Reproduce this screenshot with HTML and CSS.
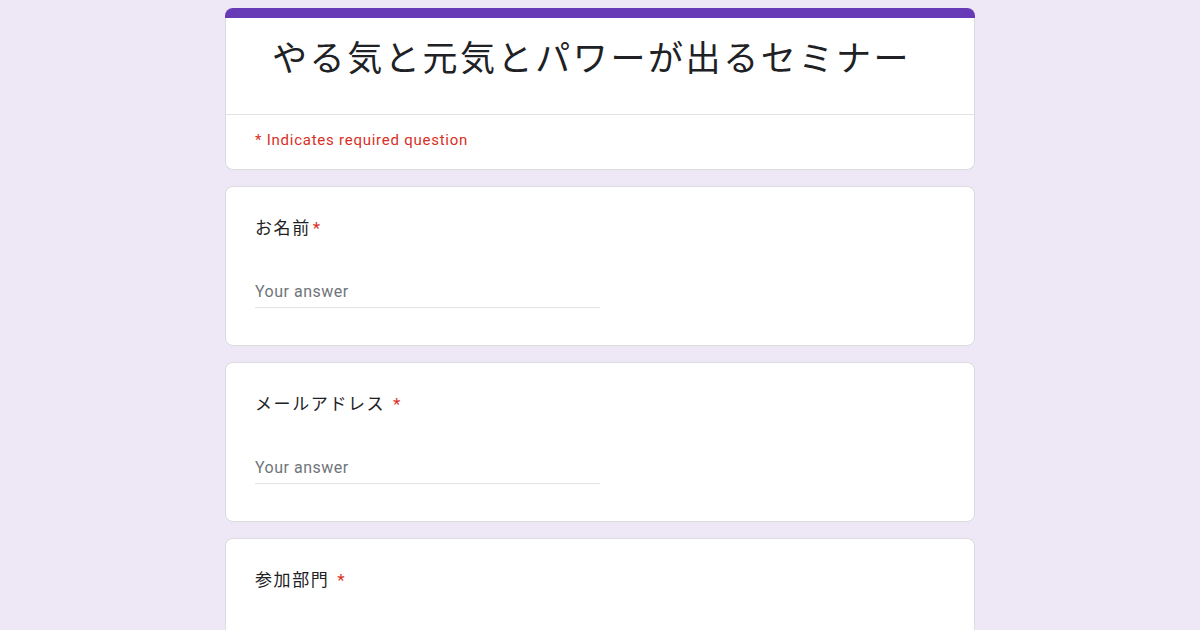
FILE: index.html
```html
<!DOCTYPE html>
<html lang="ja">
<head>
<meta charset="utf-8">
<title>やる気と元気とパワーが出るセミナー</title>
<link rel="stylesheet" href="styles.css">
</head>
<body>
<main class="page">
  <section class="form-head">
    <div class="accent"></div>
    <div class="head-body">
      <div class="title-wrap">
        <h1 class="title">やる気と元気とパワーが出るセミナー</h1>
      </div>
      <div class="required-note">* Indicates required question</div>
    </div>
  </section>

  <section class="card">
    <div class="q-label">お名前<span class="req">*</span></div>
    <div class="answer"><span class="placeholder">Your answer</span></div>
  </section>

  <section class="card">
    <div class="q-label">メールアドレス <span class="req">*</span></div>
    <div class="answer"><span class="placeholder">Your answer</span></div>
  </section>

  <section class="card">
    <div class="q-label">参加部門 <span class="req">*</span></div>
    <div class="options">
      <div class="option"><span class="radio"></span><span class="opt-text">ゲーム事業部</span></div>
      <div class="option"><span class="radio"></span><span class="opt-text">営業部</span></div>
    </div>
  </section>
</main>
</body>
</html>
```

FILE: styles.css
```css
html, body {
  margin: 0;
  padding: 0;
}

body {
  background: #ede7f6;
  font-family: Roboto, "Noto Sans CJK JP", sans-serif;
  color: #202124;
  height: 630px;
  overflow: hidden;
}

.page {
  display: flex;
  flex-direction: column;
  align-items: center;
  gap: 16px;
  padding-top: 8px;
}

.form-head,
.card {
  width: 750px;
  box-sizing: border-box;
}

.accent {
  height: 10px;
  background: #673ab7;
  border-radius: 8px 8px 0 0;
}

.head-body {
  background: #fff;
  border: 1px solid #dadce0;
  border-top: none;
  border-radius: 0 0 8px 8px;
}

.title-wrap {
  padding: 22px 24px 34px 46px;
  border-bottom: 1px solid #e3e3e6;
}

.title {
  margin: 0;
  font-size: 35px;
  line-height: 40px;
  font-weight: 400;
  letter-spacing: 2.6px;
  color: #202124;
}

.required-note {
  padding: 15px 24px 19px 29px;
  font-size: 15px;
  line-height: 20px;
  letter-spacing: 0.75px;
  color: #d93025;
}

.card {
  background: #fff;
  border: 1px solid #dadce0;
  border-radius: 8px;
  padding: 29px 24px 37px 29px;
}

.q-label {
  font-size: 17px;
  line-height: 24px;
  letter-spacing: 1.6px;
  color: #202124;
}

.req {
  color: #d93025;
  letter-spacing: 0;
  margin-left: 2px;
}

.answer {
  margin-top: 40px;
  width: 345px;
  padding-bottom: 3px;
  border-bottom: 1px solid #e3e3e6;
}

.placeholder {
  display: block;
  font-size: 16px;
  line-height: 24px;
  letter-spacing: 0.5px;
  color: #70757a;
}

.options {
  margin-top: 38px;
  display: flex;
  flex-direction: column;
  gap: 16px;
}

.option {
  display: flex;
  align-items: flex-start;
  gap: 20px;
}

.radio {
  width: 18px;
  height: 18px;
  margin-top: 8px;
  border: 2px solid #5f6368;
  border-radius: 50%;
  flex: none;
}

.opt-text {
  font-size: 16px;
  line-height: 24px;
  letter-spacing: 0.5px;
}
```
